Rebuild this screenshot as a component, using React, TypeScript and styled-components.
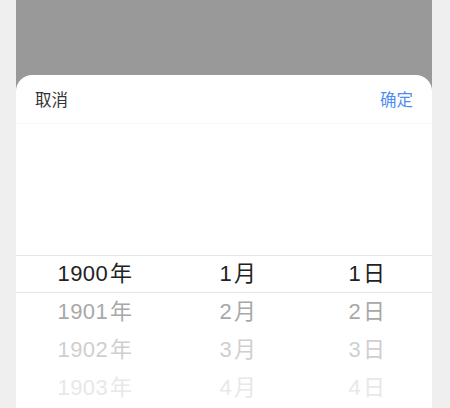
import styled, { createGlobalStyle } from "styled-components";

const GlobalStyle = createGlobalStyle`
  body {
    margin: 0;
    background: #efefef;
    font-family: "Liberation Sans", "Noto Sans CJK SC", sans-serif;
  }
`;

const Frame = styled.div`
  width: 416px;
  height: 408px;
  margin-left: 16px;
  background: #999999;
  padding-top: 75px;
  box-sizing: border-box;
  overflow: hidden;
`;

const Sheet = styled.div`
  background: #ffffff;
  border-radius: 16px 16px 0 0;
  height: 100%;
`;

const Header = styled.div`
  display: flex;
  align-items: center;
  justify-content: space-between;
  height: 48px;
  padding: 0 19px;
  border-bottom: 1px solid #f8f8f8;
  font-family: "Noto Sans CJK SC", sans-serif;
  font-size: 16.5px;
`;

const HeaderButton = styled.span<{ $primary?: boolean }>`
  color: ${(p) => (p.$primary ? "#4e8cf5" : "#333333")};
`;

const Wheel = styled.div`
  position: relative;
  display: grid;
  grid-template-columns: 158px 128px 130px;
  padding-top: 131px;
`;

const Indicator = styled.div`
  position: absolute;
  left: 0;
  right: 0;
  top: 131px;
  height: 36px;
  border-top: 1px solid #e6e6e6;
  border-bottom: 1px solid #e6e6e6;
  pointer-events: none;
`;

const Column = styled.div`
  display: flex;
  flex-direction: column;
`;

const fades = ["#222222", "#a8a8a8", "#cfcfcf", "#e8e8e8"];

const Item = styled.div<{ $depth: number }>`
  height: 38px;
  line-height: 38px;
  text-align: center;
  font-size: 22px;
  letter-spacing: 0.4px;
  color: ${(p) => fades[Math.min(p.$depth, fades.length - 1)]};
`;

const Unit = styled.span`
  margin-left: 2px;
`;

const years = ["1900", "1901", "1902", "1903"];
const months = ["1", "2", "3", "4"];
const days = ["1", "2", "3", "4"];

function PickerColumn({ items, unit }: { items: string[]; unit: string }) {
  return (
    <Column>
      {items.map((value, i) => (
        <Item key={value} $depth={i}>
          {value}
          <Unit>{unit}</Unit>
        </Item>
      ))}
    </Column>
  );
}

export default function App() {
  return (
    <>
      <GlobalStyle />
      <Frame>
        <Sheet>
          <Header>
            <HeaderButton>取消</HeaderButton>
            <HeaderButton $primary>确定</HeaderButton>
          </Header>
          <Wheel>
            <Indicator />
            <PickerColumn items={years} unit="年" />
            <PickerColumn items={months} unit="月" />
            <PickerColumn items={days} unit="日" />
          </Wheel>
        </Sheet>
      </Frame>
    </>
  );
}
